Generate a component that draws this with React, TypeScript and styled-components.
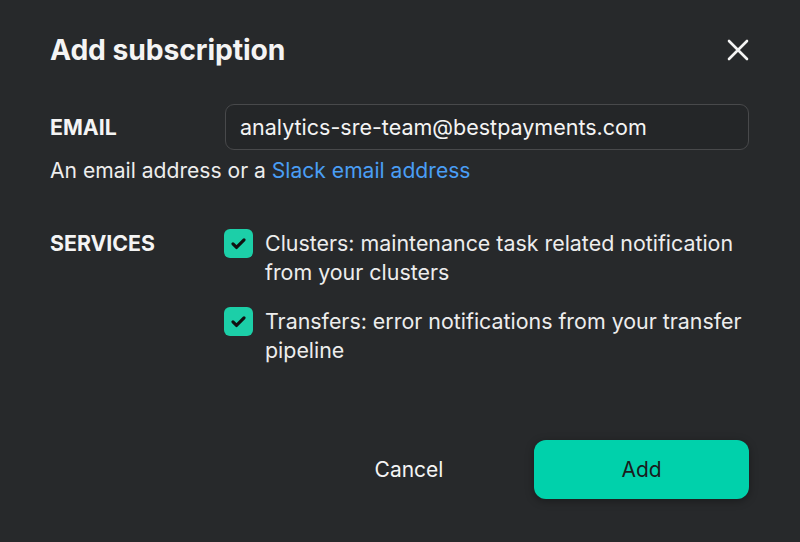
import React from "react";
import styled, { createGlobalStyle } from "styled-components";

const Global = createGlobalStyle`
  html, body { margin: 0; padding: 0; background: #27292b; }
  body { font-family: Inter, "Noto Sans", sans-serif; color: #f2f2f2; }
`;

const Dialog = styled.div`
  width: 800px;
  height: 542px;
  box-sizing: border-box;
  background: #27292b;
  padding: 31px 51px 0 50px;
  display: flex;
  flex-direction: column;
`;

const Header = styled.div`
  display: flex;
  justify-content: space-between;
  align-items: center;
  height: 38px;
`;

const Title = styled.h1`
  margin: 0;
  font-size: 28.3px;
  font-weight: 700;
  letter-spacing: -0.1px;
  color: #f4f4f4;
`;

const CloseButton = styled.button`
  background: none;
  border: none;
  padding: 0;
  width: 22px;
  height: 22px;
  display: flex;
  color: #f4f4f4;
  cursor: pointer;
`;

const Row = styled.div<{ $mt: number; $align: string }>`
  display: grid;
  grid-template-columns: 175px 1fr;
  align-items: ${(p) => p.$align};
  margin-top: ${(p) => p.$mt}px;
`;

const Label = styled.div`
  font-size: 21.3px;
  font-weight: 700;
  color: #f4f4f4;
  line-height: 29px;
`;

const Input = styled.div`
  height: 46px;
  box-sizing: border-box;
  border: 1px solid #48494b;
  border-radius: 9px;
  background: #242628;
  display: flex;
  align-items: center;
  padding-left: 14px;
  font-size: 21.5px;
  color: #f4f4f4;
`;

const Helper = styled.div`
  margin-top: 8px;
  font-size: 21.1px;
  line-height: 25px;
  color: #ededed;
`;

const Link = styled.a`
  color: #4a9ef5;
  text-decoration: none;
`;

const Services = styled.div`
  display: flex;
  flex-direction: column;
  gap: 20px;
`;

const CheckItem = styled.label`
  display: flex;
  gap: 12px;
  align-items: flex-start;
  margin-left: -1px;
`;

const Box = styled.span`
  flex: none;
  width: 29px;
  height: 29px;
  border-radius: 6px;
  background: #1ccfa8;
  display: flex;
  align-items: center;
  justify-content: center;
  color: #111;
`;

const CheckText = styled.span`
  font-size: 21.4px;
  line-height: 29px;
  color: #ededed;
`;

const Footer = styled.div`
  margin-top: auto;
  margin-bottom: 43px;
  display: flex;
  justify-content: flex-end;
  align-items: center;
`;

const CancelButton = styled.button`
  background: none;
  border: none;
  width: 214px;
  height: 59px;
  font-family: inherit;
  font-size: 21px;
  color: #f4f4f4;
  margin-right: 18px;
  text-align: center;
  cursor: pointer;
`;

const AddButton = styled.button`
  width: 215px;
  height: 59px;
  border: none;
  border-radius: 12px;
  background: #00d1ab;
  font-family: inherit;
  font-size: 21px;
  color: #1a1c1d;
  box-shadow: 0 2px 8px rgba(0, 0, 0, 0.35);
  cursor: pointer;
`;

const Check = () => (
  <svg width="19" height="19" viewBox="0 0 24 24" fill="none" stroke="currentColor" strokeWidth="4" strokeLinecap="round" strokeLinejoin="round">
    <path d="M5 12.5l4.5 4.5L19 7.5" />
  </svg>
);

export default function App() {
  return (
    <>
      <Global />
      <Dialog>
        <Header>
          <Title>Add subscription</Title>
          <CloseButton aria-label="Close">
            <svg width="22" height="22" viewBox="0 0 22 22" stroke="currentColor" strokeWidth="2.6" strokeLinecap="round">
              <path d="M2 2l18 18M20 2L2 20" />
            </svg>
          </CloseButton>
        </Header>
        <Row $mt={35} $align="center">
          <Label>EMAIL</Label>
          <Input>analytics-sre-team@bestpayments.com</Input>
        </Row>
        <Helper>
          An email address or a <Link href="#">Slack email address</Link>
        </Helper>
        <Row $mt={46} $align="start">
          <Label>SERVICES</Label>
          <Services>
            <CheckItem>
              <Box><Check /></Box>
              <CheckText>Clusters: maintenance task related notification from your clusters</CheckText>
            </CheckItem>
            <CheckItem>
              <Box><Check /></Box>
              <CheckText>Transfers: error notifications from your transfer pipeline</CheckText>
            </CheckItem>
          </Services>
        </Row>
        <Footer>
          <CancelButton>Cancel</CancelButton>
          <AddButton>Add</AddButton>
        </Footer>
      </Dialog>
    </>
  );
}
